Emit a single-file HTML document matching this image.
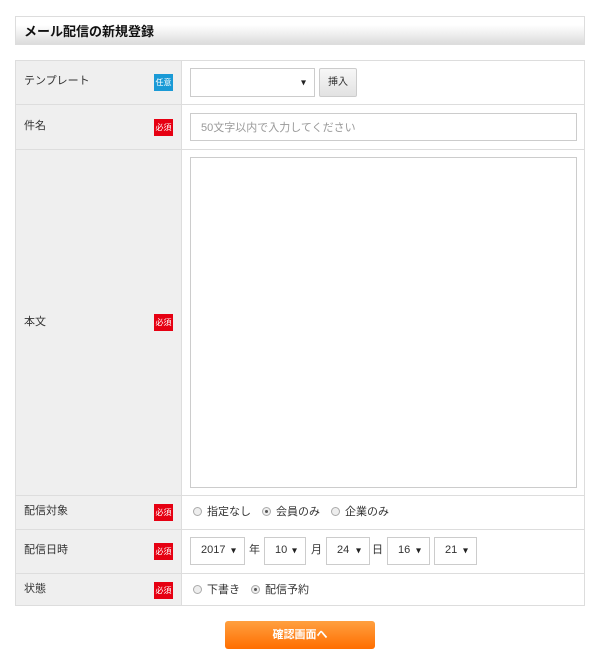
<!DOCTYPE html>
<html><head><meta charset="utf-8"><style>
*{box-sizing:border-box;margin:0;padding:0}
body{width:600px;height:665px;background:#fff;font-family:"Liberation Sans","Noto Sans CJK JP",sans-serif;font-size:11px;color:#333;position:relative;overflow:hidden}
.a{position:absolute}
.hd{left:15px;top:16px;width:570px;height:29px;border:1px solid #ddd;background:linear-gradient(#fff 30%,#dcdcdc);font-weight:bold;font-size:13px;color:#111;padding:4px 0 0 8px}
.lab{background:#efefef;left:15px;width:166px;border-left:1px solid #ddd}
.row{left:15px;width:570px;border-top:1px solid #ddd}
.lt{left:24px;font-size:11px;color:#333}
.bd{left:154px;width:19px;height:17px;color:#fff;font-size:8px;text-align:center;line-height:17px}
.r{background:#e60012}.b{background:#1a9ad6}
.box{border:1px solid #ccc;background:#fff}
.sel::after{content:"▾";position:absolute;right:8px;top:50%;transform:translateY(-50%);font-size:10px;color:#222}
.sel{font-size:11px;color:#333;padding:6px 0 0 10px}
.rad{display:inline-block;width:9px;height:9px;border:1px solid #aaa;border-radius:50%;background:#eee;vertical-align:-1px;margin-right:5px;position:relative}
.rad.on::after{content:"";position:absolute;left:2px;top:2px;width:3px;height:3px;border-radius:50%;background:#555}
</style></head><body>
<div class="a hd">メール配信の新規登録</div>
<div class="a lab" style="top:60px;height:546px"></div>
<div class="a" style="left:15px;top:60px;width:570px;height:546px;border:1px solid #ddd"></div>
<div class="a" style="left:181px;top:60px;width:1px;height:546px;background:#ddd"></div>
<div class="a row" style="top:104px"></div>
<div class="a row" style="top:149px"></div>
<div class="a row" style="top:495px"></div>
<div class="a row" style="top:529px"></div>
<div class="a row" style="top:573px"></div>

<div class="a lt" style="top:72px">テンプレート</div><div class="a bd b" style="top:74px">任意</div>
<div class="a lt" style="top:117px">件名</div><div class="a bd r" style="top:119px">必須</div>
<div class="a lt" style="top:313px">本文</div><div class="a bd r" style="top:314px">必須</div>
<div class="a lt" style="top:502px">配信対象</div><div class="a bd r" style="top:504px">必須</div>
<div class="a lt" style="top:541px">配信日時</div><div class="a bd r" style="top:543px">必須</div>
<div class="a lt" style="top:580px">状態</div><div class="a bd r" style="top:582px">必須</div>

<div class="a box sel" style="left:190px;top:68px;width:125px;height:29px"></div>
<div class="a" style="left:319px;top:68px;width:38px;height:29px;border:1px solid #ccc;border-radius:2px;background:linear-gradient(#f7f7f7,#e2e2e2);font-size:10px;text-align:center;line-height:27px">挿入</div>
<div class="a box" style="left:190px;top:113px;width:387px;height:28px;color:#999;padding:5px 0 0 10px">50文字以内で入力してください</div>
<div class="a box" style="left:190px;top:157px;width:387px;height:331px"></div>

<div class="a" style="left:193px;top:503px"><span class="rad"></span>指定なし　<span class="rad on"></span>会員のみ　<span class="rad"></span>企業のみ</div>

<div class="a box sel" style="left:190px;top:537px;width:55px;height:28px">2017</div>
<div class="a" style="left:249px;top:541px">年</div>
<div class="a box sel" style="left:264px;top:537px;width:42px;height:28px">10</div>
<div class="a" style="left:311px;top:541px">月</div>
<div class="a box sel" style="left:326px;top:537px;width:44px;height:28px">24</div>
<div class="a" style="left:372px;top:541px">日</div>
<div class="a box sel" style="left:387px;top:537px;width:43px;height:28px">16</div>
<div class="a box sel" style="left:434px;top:537px;width:43px;height:28px">21</div>

<div class="a" style="left:193px;top:581px"><span class="rad"></span>下書き　<span class="rad on"></span>配信予約</div>

<div class="a" style="left:225px;top:621px;width:150px;height:28px;border-radius:3px;background:linear-gradient(#ffa040,#ff6e00);color:#fff;font-weight:bold;font-size:11px;text-align:center;line-height:28px">確認画面へ</div>
</body></html>
